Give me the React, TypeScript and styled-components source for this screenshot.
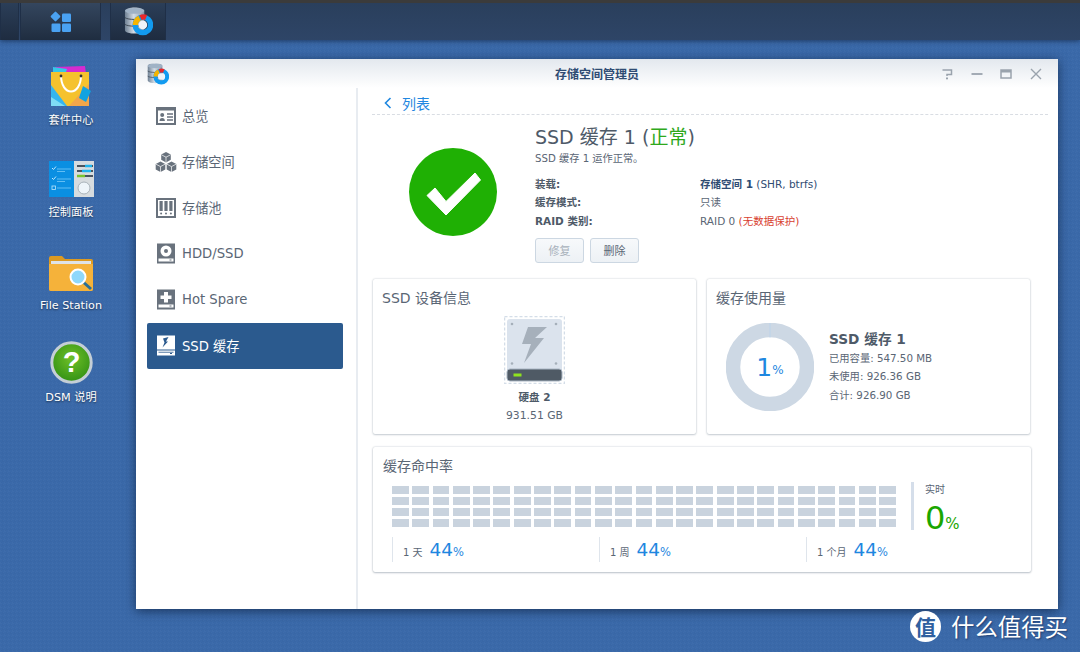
import React from 'react';
import styled, { createGlobalStyle } from 'styled-components';

const FONT = '"DejaVu Sans", "Noto Sans CJK SC", sans-serif';

const GlobalStyle = createGlobalStyle`
  html, body {
    margin: 0;
    padding: 0;
    background: #3a69a9;
    font-family: ${FONT};
  }
`;

const Desktop = styled.div`
  position: relative;
  width: 1080px;
  height: 652px;
  overflow: hidden;
  display: flex;
  flex-direction: column;
  background-color: #3a69a9;
  background-image:
    linear-gradient(45deg, rgba(255, 255, 255, 0.018) 25%, transparent 25%, transparent 75%, rgba(255, 255, 255, 0.018) 75%),
    linear-gradient(45deg, rgba(0, 0, 0, 0.02) 25%, transparent 25%, transparent 75%, rgba(0, 0, 0, 0.02) 75%);
  background-size: 4px 4px;
  background-position: 0 0, 2px 2px;
`;

const TopBar = styled.div`
  height: 37px;
  flex: none;
  display: flex;
  border-top: 3px solid #3b3b3b;
  background: linear-gradient(#2a3f5c, #2e4567);
  box-shadow: 0 1px 5px rgba(10, 25, 50, 0.6);
`;

const TaskButton = styled.div<{ $w: number; $gap: number; $raised?: boolean }>`
  width: ${p => p.$w}px;
  margin-left: ${p => p.$gap}px;
  box-sizing: border-box;
  flex: none;
  display: flex;
  align-items: center;
  justify-content: center;
  border-left: 1px solid #1f2f47;
  border-right: 1px solid #1f2f47;
  background: ${p => (p.$raised ? 'linear-gradient(#34465e, #1f2d40)' : 'linear-gradient(#2b3e58, #1e2c40)')};
`;

const Shortcuts = styled.div`
  display: flex;
  flex-direction: column;
  width: 142px;
  padding-top: 21px;
`;

const Shortcut = styled.div`
  height: 92.3px;
  display: flex;
  flex-direction: column;
  align-items: center;
  flex: none;
`;

const ShortcutIcon = styled.div<{ $lift?: number }>`
  height: 48px;
  box-sizing: border-box;
  padding-bottom: ${p => p.$lift ?? 0}px;
  display: flex;
  align-items: flex-end;
  justify-content: center;
`;

const ShortcutLabel = styled.div`
  margin-top: 4px;
  font-size: 11.2px;
  line-height: 16px;
  color: #fff;
  text-shadow: 0 1px 2px rgba(0, 0, 0, 0.55);
`;

const Window = styled.div`
  position: absolute;
  left: 136px;
  top: 59px;
  width: 922px;
  height: 550px;
  display: flex;
  flex-direction: column;
  background: #fff;
  box-shadow: 0 2px 10px rgba(5, 20, 45, 0.6);
`;

const TitleBar = styled.div`
  height: 29px;
  flex: none;
  display: grid;
  grid-template-columns: 1fr auto 1fr;
  align-items: center;
  background: linear-gradient(#e3e8ee, #ffffff);
`;

const TitleIcon = styled.div`
  padding-left: 11px;
  display: flex;
`;

const TitleText = styled.div`
  font-size: 12px;
  font-weight: 700;
  color: #2f4c73;
`;

const WindowControls = styled.div`
  display: flex;
  justify-content: flex-end;
  padding-right: 15px;
  gap: 15.7px;
`;

const Body = styled.div`
  flex: 1;
  display: flex;
  min-height: 0;
`;

const Sidebar = styled.div`
  width: 196px;
  flex: none;
  padding: 5px 13px 0 11px;
  border-right: 2px solid #e8ecf1;
`;

const NavItem = styled.div<{ $active?: boolean }>`
  height: 46px;
  display: flex;
  align-items: center;
  gap: 5px;
  padding: 0 0 1px 8px;
  box-sizing: border-box;
  border-radius: 2px;
  font-size: 13.2px;
  color: ${p => (p.$active ? '#fff' : '#5a6675')};
  background: ${p => (p.$active ? '#2b5a8e' : 'transparent')};
`;

const Content = styled.div`
  flex: 1;
  min-width: 0;
  padding: 0 10px 0 14px;
`;

const BackRow = styled.div`
  height: 27px;
  box-sizing: border-box;
  display: flex;
  align-items: center;
  gap: 10px;
  padding: 3px 0 0 12px;
  border-bottom: 1px dashed #d9dde3;
  font-size: 14px;
  color: #1f87e0;
`;

const Summary = styled.div`
  height: 164px;
  display: flex;
`;

const StatusCol = styled.div`
  width: 162px;
  flex: none;
  padding: 33px 1px 0 0;
  display: flex;
  justify-content: center;
  align-items: flex-start;
`;

const InfoCol = styled.div`
  padding-top: 10px;
`;

const Heading = styled.div`
  font-size: 19px;
  line-height: 24px;
  color: #4e5a68;
`;

const Healthy = styled.span`
  color: #2fa81c;
`;

const Subheading = styled.div`
  font-size: 10.2px;
  line-height: 14px;
  margin-top: 3px;
  color: #5a6675;
`;

const Props = styled.div`
  display: grid;
  grid-template-columns: 165px auto;
  grid-auto-rows: 18.5px;
  align-items: center;
  margin-top: 8px;
  font-size: 10.5px;
`;

const PropLabel = styled.div`
  font-weight: 700;
  color: #4e5a68;
`;

const PropValue = styled.div<{ $link?: boolean }>`
  color: ${p => (p.$link ? '#2f4c73' : '#5a6675')};
`;

const LinkStrong = styled.b`
  font-weight: 700;
`;

const Warn = styled.span`
  color: #d8402f;
`;

const Buttons = styled.div`
  display: flex;
  gap: 6px;
  margin-top: 8px;
`;

const Action = styled.div<{ $disabled?: boolean }>`
  width: 49px;
  height: 25px;
  box-sizing: border-box;
  display: flex;
  align-items: center;
  justify-content: center;
  border: 1px solid #ccd7e2;
  border-radius: 3px;
  font-size: 11px;
  background: linear-gradient(#f7f9fb, #edf1f5);
  color: ${p => (p.$disabled ? '#a8b1bb' : '#5a6675')};
`;

const CardRow = styled.div`
  display: flex;
  gap: 11px;
  margin-left: 1px;
`;

const Card = styled.div`
  width: 323px;
  height: 155px;
  box-sizing: border-box;
  padding: 10px 9px 0;
  border-radius: 2px;
  background: #fff;
  box-shadow: 0 0 2px rgba(40, 60, 85, 0.28), 0 1px 2px rgba(40, 60, 85, 0.2);
`;

const CardTitle = styled.div`
  font-size: 14px;
  line-height: 19px;
  color: #5a6675;
`;

const DiskBlock = styled.div`
  margin-top: 8px;
  display: flex;
  flex-direction: column;
  align-items: center;
`;

const DiskName = styled.div`
  margin-top: 6px;
  font-size: 10.5px;
  line-height: 14px;
  font-weight: 700;
  color: #4e5a68;
`;

const DiskSize = styled.div`
  margin-top: 5px;
  font-size: 10.8px;
  line-height: 14px;
  color: #5a6675;
`;

const UsageBody = styled.div`
  display: flex;
  margin-top: 15px;
  padding-left: 10px;
  gap: 15px;
`;

const Donut = styled.div`
  position: relative;
  width: 88px;
  height: 88px;
  flex: none;
`;

const DonutLabel = styled.div`
  position: absolute;
  inset: 0;
  display: flex;
  align-items: center;
  justify-content: center;
  padding-top: 1px;
  color: #1f87e0;
  font-size: 25px;
`;

const DonutUnit = styled.span`
  font-size: 12px;
  margin-top: 5px;
`;

const UsageInfo = styled.div`
  padding-top: 7px;
`;

const UsageTitle = styled.div`
  font-size: 13.7px;
  line-height: 19px;
  font-weight: 700;
  color: #4e5a68;
`;

const UsageLine = styled.div`
  font-size: 10.3px;
  line-height: 18.4px;
  color: #5a6675;
`;

const HitCard = styled.div`
  width: 658px;
  height: 125px;
  box-sizing: border-box;
  margin: 13px 0 0 1px;
  padding: 10px 10px 0;
  border-radius: 2px;
  background: #fff;
  box-shadow: 0 0 2px rgba(40, 60, 85, 0.28), 0 1px 2px rgba(40, 60, 85, 0.25);
`;

const HitLayout = styled.div`
  display: flex;
  margin-top: 6px;
`;

const HitMain = styled.div`
  width: 504px;
  margin-left: 9px;
  flex: none;
`;

const Blocks = styled.div`
  display: grid;
  grid-template-columns: repeat(25, 1fr);
  grid-auto-rows: 8px;
  column-gap: 3.5px;
  row-gap: 3px;
  padding-top: 4px;
`;

const BlockCell = styled.div`
  background: #c9d3de;
`;

const Periods = styled.div`
  display: grid;
  grid-template-columns: repeat(3, 207px);
  margin-top: 10px;
`;

const Period = styled.div`
  height: 25px;
  display: flex;
  align-items: center;
  padding-left: 10px;
  gap: 7px;
  border-left: 1px solid #dfe5ec;
`;

const PeriodName = styled.span`
  font-size: 10px;
  color: #5a6675;
  padding-top: 3px;
`;

const PeriodValue = styled.span`
  font-size: 18.5px;
  color: #1f87e0;
`;

const PeriodUnit = styled.span`
  font-size: 11.5px;
`;

const Live = styled.div`
  margin: 0 0 0 15px;
  height: 48px;
  padding-left: 11px;
  border-left: 3px solid #d5deea;
`;

const LiveLabel = styled.div`
  font-size: 10px;
  line-height: 16px;
  color: #5a6675;
`;

const LiveValue = styled.div`
  font-size: 32px;
  line-height: 40px;
  color: #1aa600;
`;

const LiveUnit = styled.span`
  font-size: 15px;
`;

const Watermark = styled.div`
  position: absolute;
  left: 910px;
  top: 609px;
  display: flex;
  align-items: center;
  gap: 10px;
  color: #fff;
  font-size: 23.4px;
  text-shadow: 1px 1px 2px rgba(10, 30, 70, 0.6);
`;

const WatermarkBadge = styled.div`
  width: 31px;
  height: 31px;
  border-radius: 50%;
  background: #fff;
  color: #2f5f9f;
  font-size: 21px;
  font-weight: 700;
  display: flex;
  align-items: center;
  justify-content: center;
  text-shadow: none;
`;

const DsmIcon = () => (
  <svg width="22" height="22" viewBox="0 0 22 22">
    <rect x="1.8" y="1.8" width="7.4" height="7.4" rx="1" fill="#4aa2f2" transform="rotate(45 5.5 5.5)" />
    <rect x="12" y="2.5" width="9" height="8.5" rx="1.2" fill="#4aa2f2" />
    <rect x="1.5" y="12.5" width="9" height="8.5" rx="1.2" fill="#4aa2f2" />
    <rect x="12" y="12.5" width="9" height="8.5" rx="1.2" fill="#4aa2f2" />
  </svg>
);

const StorageAppIcon = ({ size }: { size: number }) => (
  <svg width={size} height={size} viewBox="0 0 30 30">
    <defs>
      <linearGradient id="dbBody" x1="0" x2="1" y1="0" y2="0">
        <stop offset="0" stopColor="#6f8194" />
        <stop offset="0.45" stopColor="#d3dce6" />
        <stop offset="1" stopColor="#8496a8" />
      </linearGradient>
    </defs>
    <path d="M1 4c0-2.2 5-3.5 10-3.5S21 1.800 21 4v20c0 2.200-5 3.500-10 3.500S1 26.200 1 24z" fill="url(#dbBody)" />
    <ellipse cx="11" cy="4" rx="10" ry="3" fill="#9fb2c6" />
    <path d="M1 11c3 2.500 17 2.500 20 0M1 18c3 2.500 17 2.500 20 0" stroke="#3f4a55" strokeWidth="1" fill="none" />
    <circle cx="19.500" cy="18.500" r="8" fill="none" stroke="#129bf0" strokeWidth="5.500" />
    <path d="M9 18.500a10.500 10.500 0 0 1 6-9.500l2.200 5a5 5 0 0 0-2.700 4.500z" fill="#f5b400" />
    <path d="M16 8.500a10.500 10.500 0 0 1 8-.1l-2.200 5a5 5 0 0 0-3.600 0z" fill="#e8282b" />
    <circle cx="19.500" cy="18.500" r="4.500" fill="#eef3f8" />
  </svg>
);

const BagIcon = () => (
  <svg width="44" height="44" viewBox="0 0 44 44">
    <path d="M6 2l30-1 1 8H6z" fill="#d52bd0" />
    <path d="M4 2l14 2-2 6H4z" fill="#35c6e8" />
    <path d="M2 7h38v34H2z" fill="#f5c22e" />
    <path d="M2 20l16 21H2z" fill="#35b5ee" />
    <path d="M2 32l14 9H2z" fill="#7fdcf5" />
    <path d="M20 41l20-22v22z" fill="#f2a64a" />
    <path d="M12 10c0 22 20 22 20 0" fill="none" stroke="#fff" strokeWidth="2" />
    <circle cx="12" cy="11" r="1.400" fill="#333" />
    <circle cx="32" cy="11" r="1.400" fill="#333" />
    <path d="M34 21l8 5-5 11-7-4z" fill="#12a3e0" />
  </svg>
);

const ControlPanelIcon = () => (
  <svg width="45" height="36" viewBox="0 0 45 36">
    <rect width="25" height="36" fill="#0a8fe2" />
    <rect x="25" width="20" height="36" fill="#d7dcdf" />
    <path d="M3 7l1.500 1.500L7 5.500M3 17l1.500 1.500L7 15.500" fill="none" stroke="#bfe6fb" strokeWidth="1" />
    <rect x="3" y="25" width="3.500" height="3.500" fill="none" stroke="#bfe6fb" strokeWidth="0.800" />
    <path d="M8 8h14M8 10.500h8M8 18h14M8 20.500h8M8 27h14" stroke="#6cc3f5" strokeWidth="0.900" />
    <path d="M28 5h16" stroke="#4a5560" strokeWidth="2" />
    <path d="M36 5h7" stroke="#1db4ec" strokeWidth="2.500" />
    <path d="M28 10h16" stroke="#4a5560" strokeWidth="2" />
    <path d="M33 10h9" stroke="#1db4ec" strokeWidth="2.500" />
    <path d="M28 15h8" stroke="#7ac52f" strokeWidth="2.500" />
    <path d="M36 15h8" stroke="#4a5560" strokeWidth="2" />
    <circle cx="35" cy="27" r="6" fill="#eef5fa" stroke="#a9b3ba" />
  </svg>
);

const FolderIcon = () => (
  <svg width="44" height="36" viewBox="0 0 44 36">
    <path d="M0 3a2 2 0 0 1 2-2h11l3 3h26a2 2 0 0 1 2 2v28a2 2 0 0 1-2 2H2a2 2 0 0 1-2-2z" fill="#dc9a22" />
    <rect x="2" y="6" width="40" height="3" fill="#dfe3e6" />
    <path d="M0 9h44v25a2 2 0 0 1-2 2H2a2 2 0 0 1-2-2z" fill="#f5b23a" />
    <path d="M33 26l9 8" stroke="#2a6f96" strokeWidth="3" />
    <circle cx="29" cy="22" r="7.500" fill="#8fd8fb" stroke="#fff" strokeWidth="2" />
  </svg>
);

const HelpIcon = () => (
  <svg width="43" height="43" viewBox="0 0 43 43">
    <defs>
      <radialGradient id="helpFill" cy="0.4" r="0.65">
        <stop offset="0" stopColor="#6fc028" />
        <stop offset="1" stopColor="#2e8e13" />
      </radialGradient>
    </defs>
    <circle cx="21.500" cy="21.500" r="19.700" fill="url(#helpFill)" stroke="#c4ced6" strokeWidth="3" />
    <text x="21.500" y="31" fontSize="29" fontWeight="700" fontFamily="'Liberation Sans', sans-serif" fill="#fff" textAnchor="middle">?</text>
  </svg>
);

const OverviewGlyph = ({ c }: { c: string }) => (
  <svg width="20" height="20" viewBox="0 0 20 20">
    <rect x="1" y="2" width="18" height="16" fill="none" stroke={c} strokeWidth="2" />
    <rect x="1" y="2" width="18" height="2.500" fill={c} />
    <circle cx="6.200" cy="9" r="2" fill={c} />
    <path d="M3.500 15c0-2 1-3 2.700-3s2.700 1 2.700 3z" fill={c} />
    <path d="M11 8h6M11 11h6M11 14h6" stroke={c} strokeWidth="1.400" />
  </svg>
);

const CubesGlyph = ({ c }: { c: string }) => (
  <svg width="22" height="22" viewBox="0 0 22 22">
    <path d="M11 1l4.800 2.600v5.200L11 11.400 6.200 8.800V3.600z" fill={c} />
    <path d="M5.500 10.400l4.800 2.600v5.400l-4.800 2.600-4.800-2.600V13z" fill={c} />
    <path d="M16.500 10.400l4.800 2.600v5.400l-4.800 2.600-4.800-2.600V13z" fill={c} />
    <path d="M6.500 3.800L11 6.200l4.500-2.400M11 6.200v5M1 13.200l4.500 2.400 4.500-2.400M5.500 15.600V21M12 13.200l4.500 2.400 4.500-2.400M16.500 15.600V21" stroke="#fff" strokeWidth="0.700" fill="none" />
  </svg>
);

const PoolGlyph = ({ c }: { c: string }) => (
  <svg width="20" height="20" viewBox="0 0 20 20">
    <rect x="1" y="1" width="18" height="18" fill="none" stroke={c} strokeWidth="2" />
    <rect x="3.500" y="3" width="3.200" height="10" fill={c} />
    <rect x="8.400" y="3" width="3.200" height="10" fill={c} />
    <rect x="13.300" y="3" width="3.200" height="10" fill={c} />
    <circle cx="5.100" cy="15.500" r="1" fill={c} />
    <circle cx="10" cy="15.500" r="1" fill={c} />
    <circle cx="14.900" cy="15.500" r="1" fill={c} />
  </svg>
);

const DriveFrame = ({ c, bg, children }: { c: string; bg: string; children?: React.ReactNode }) => (
  <svg width="20" height="21" viewBox="0 0 20 21">
    <rect x="1" y="0.500" width="18" height="20" fill={c} />
    <rect x="2.500" y="15.500" width="15" height="3" fill={bg} />
    <rect x="13.500" y="16.500" width="2" height="1" fill={c} />
    {children}
  </svg>
);

const HddGlyph = ({ c }: { c: string }) => (
  <DriveFrame c={c} bg="#fff">
    <circle cx="10" cy="8" r="5.500" fill="#fff" />
    <circle cx="10" cy="8" r="2" fill={c} />
  </DriveFrame>
);

const SpareGlyph = ({ c }: { c: string }) => (
  <DriveFrame c={c} bg="#fff">
    <path d="M8 3h4v3.500h3.500v3.500H12v3.500H8V10H4.500V6.500H8z" fill="#fff" />
  </DriveFrame>
);

const SsdGlyph = () => (
  <svg width="20" height="21" viewBox="0 0 20 21">
    <rect x="1" y="0.500" width="18" height="14" fill="#fff" />
    <rect x="1" y="15.500" width="18" height="5" fill="#fff" />
    <rect x="2.500" y="16.800" width="15" height="0.800" fill="#2b5a8e" />
    <rect x="14" y="18" width="2" height="1" fill="#2b5a8e" />
    <path d="M12.500 2L7 3.500 8.500 7.500 6.500 12.500 12 6.500H10z" fill="#2b5a8e" />
  </svg>
);

const Glyph = styled.span`
  width: 22px;
  display: flex;
  justify-content: center;
`;

const WinIcon = styled.svg`
  display: block;
`;

const SsdTile = () => (
  <svg width="61" height="68" viewBox="0 0 61 68">
    <rect x="0.500" y="0.500" width="60" height="67" fill="none" stroke="#d4dde8" strokeWidth="1.500" strokeDasharray="3 2" />
    <rect x="3" y="3" width="55" height="52" rx="3" fill="#dbe3ed" />
    <circle cx="8" cy="8" r="1.300" fill="#a5afba" />
    <circle cx="52" cy="8" r="1.300" fill="#a5afba" />
    <circle cx="8" cy="47.500" r="1.300" fill="#a5afba" />
    <circle cx="52" cy="47.500" r="1.300" fill="#a5afba" />
    <path d="M43 11H24l-6 17h9l-7 19 20-25h-9z" fill="#a6b0bb" />
    <rect x="3" y="53" width="55" height="12" rx="3" fill="#4f5a65" stroke="#a8b4c2" strokeWidth="1" />
    <rect x="9.500" y="57.500" width="8" height="3" fill="#8fe31e" />
  </svg>
);

const NAV = [
  { label: '总览', icon: <OverviewGlyph c="#69727d" /> },
  { label: '存储空间', icon: <CubesGlyph c="#69727d" /> },
  { label: '存储池', icon: <PoolGlyph c="#69727d" /> },
  { label: 'HDD/SSD', icon: <HddGlyph c="#69727d" /> },
  { label: 'Hot Spare', icon: <SpareGlyph c="#69727d" /> },
  { label: 'SSD 缓存', icon: <SsdGlyph />, active: true },
];

const PERIODS = ['1 天', '1 周', '1 个月'];

export default function App() {
  return (
    <Desktop>
      <GlobalStyle />
      <TopBar>
        <TaskButton $w={19} $gap={0} />
        <TaskButton $w={81} $gap={1} $raised>
          <DsmIcon />
        </TaskButton>
        <TaskButton $w={56} $gap={9}>
          <StorageAppIcon size={29} />
        </TaskButton>
      </TopBar>

      <Shortcuts>
        <Shortcut>
          <ShortcutIcon><BagIcon /></ShortcutIcon>
          <ShortcutLabel>套件中心</ShortcutLabel>
        </Shortcut>
        <Shortcut>
          <ShortcutIcon $lift={4}><ControlPanelIcon /></ShortcutIcon>
          <ShortcutLabel>控制面板</ShortcutLabel>
        </Shortcut>
        <Shortcut>
          <ShortcutIcon $lift={3}><FolderIcon /></ShortcutIcon>
          <ShortcutLabel>File Station</ShortcutLabel>
        </Shortcut>
        <Shortcut>
          <ShortcutIcon $lift={2}><HelpIcon /></ShortcutIcon>
          <ShortcutLabel>DSM 说明</ShortcutLabel>
        </Shortcut>
      </Shortcuts>

      <Window>
        <TitleBar>
          <TitleIcon><StorageAppIcon size={22} /></TitleIcon>
          <TitleText>存储空间管理员</TitleText>
          <WindowControls>
            <WinIcon width="14" height="14" viewBox="0 0 14 14">
              <path d="M2.500 3h9v4.500H7V9" fill="none" stroke="#9aa3ad" strokeWidth="1.500" />
              <rect x="6" y="10.500" width="2" height="1.800" fill="#9aa3ad" />
            </WinIcon>
            <WinIcon width="14" height="14" viewBox="0 0 14 14">
              <path d="M1.500 7h11" stroke="#9aa3ad" strokeWidth="1.800" />
            </WinIcon>
            <WinIcon width="14" height="14" viewBox="0 0 14 14">
              <rect x="2" y="3" width="10" height="8" fill="none" stroke="#9aa3ad" strokeWidth="1.500" />
              <rect x="2" y="3" width="10" height="2.500" fill="#9aa3ad" />
            </WinIcon>
            <WinIcon width="14" height="14" viewBox="0 0 14 14">
              <path d="M2 2l10 10M12 2L2 12" stroke="#9aa3ad" strokeWidth="1.400" />
            </WinIcon>
          </WindowControls>
        </TitleBar>
        <Body>
          <Sidebar>
            {NAV.map(item => (
              <NavItem key={item.label} $active={item.active}>
                <Glyph>{item.icon}</Glyph>
                {item.label}
              </NavItem>
            ))}
          </Sidebar>
          <Content>
            <BackRow>
              <svg width="8" height="12" viewBox="0 0 8 12">
                <path d="M6.500 1L1.500 6l5 5" fill="none" stroke="#1f87e0" strokeWidth="1.600" />
              </svg>
              列表
            </BackRow>
            <Summary>
              <StatusCol>
                <svg width="88" height="88" viewBox="0 0 88 88">
                  <circle cx="44" cy="44" r="44" fill="#1fb004" />
                  <path d="M18 47.500l8-7.500 11 13.500L66 25l5.500 7L37 67z" fill="#fff" stroke="#fff" strokeWidth="1" strokeLinejoin="round" />
                </svg>
              </StatusCol>
              <InfoCol>
                <Heading>SSD 缓存 1 (<Healthy>正常</Healthy>)</Heading>
                <Subheading>SSD 缓存 1 运作正常。</Subheading>
                <Props>
                  <PropLabel>装载:</PropLabel>
                  <PropValue $link><LinkStrong>存储空间 1</LinkStrong> (SHR, btrfs)</PropValue>
                  <PropLabel>缓存模式:</PropLabel>
                  <PropValue>只读</PropValue>
                  <PropLabel>RAID 类别:</PropLabel>
                  <PropValue>RAID 0 <Warn>(无数据保护)</Warn></PropValue>
                </Props>
                <Buttons>
                  <Action $disabled>修复</Action>
                  <Action>删除</Action>
                </Buttons>
              </InfoCol>
            </Summary>
            <CardRow>
              <Card>
                <CardTitle>SSD 设备信息</CardTitle>
                <DiskBlock>
                  <SsdTile />
                  <DiskName>硬盘 2</DiskName>
                  <DiskSize>931.51 GB</DiskSize>
                </DiskBlock>
              </Card>
              <Card>
                <CardTitle>缓存使用量</CardTitle>
                <UsageBody>
                  <Donut>
                    <svg width="88" height="88" viewBox="0 0 88 88">
                      <circle cx="44" cy="44" r="37" fill="none" stroke="#cdd8e4" strokeWidth="14.500" />
                      <path d="M44 0v14.500" stroke="#bcd3ea" strokeWidth="1" />
                    </svg>
                    <DonutLabel>1<DonutUnit>%</DonutUnit></DonutLabel>
                  </Donut>
                  <UsageInfo>
                    <UsageTitle>SSD 缓存 1</UsageTitle>
                    <UsageLine>已用容量: 547.50 MB</UsageLine>
                    <UsageLine>未使用: 926.36 GB</UsageLine>
                    <UsageLine>合计: 926.90 GB</UsageLine>
                  </UsageInfo>
                </UsageBody>
              </Card>
            </CardRow>
            <HitCard>
              <CardTitle>缓存命中率</CardTitle>
              <HitLayout>
                <HitMain>
                  <Blocks>
                    {Array.from({ length: 100 }, (_, i) => <BlockCell key={i} />)}
                  </Blocks>
                  <Periods>
                    {PERIODS.map(name => (
                      <Period key={name}>
                        <PeriodName>{name}</PeriodName>
                        <PeriodValue>44<PeriodUnit>%</PeriodUnit></PeriodValue>
                      </Period>
                    ))}
                  </Periods>
                </HitMain>
                <Live>
                  <LiveLabel>实时</LiveLabel>
                  <LiveValue>0<LiveUnit>%</LiveUnit></LiveValue>
                </Live>
              </HitLayout>
            </HitCard>
          </Content>
        </Body>
      </Window>

      <Watermark>
        <WatermarkBadge>值</WatermarkBadge>
        什么值得买
      </Watermark>
    </Desktop>
  );
}
